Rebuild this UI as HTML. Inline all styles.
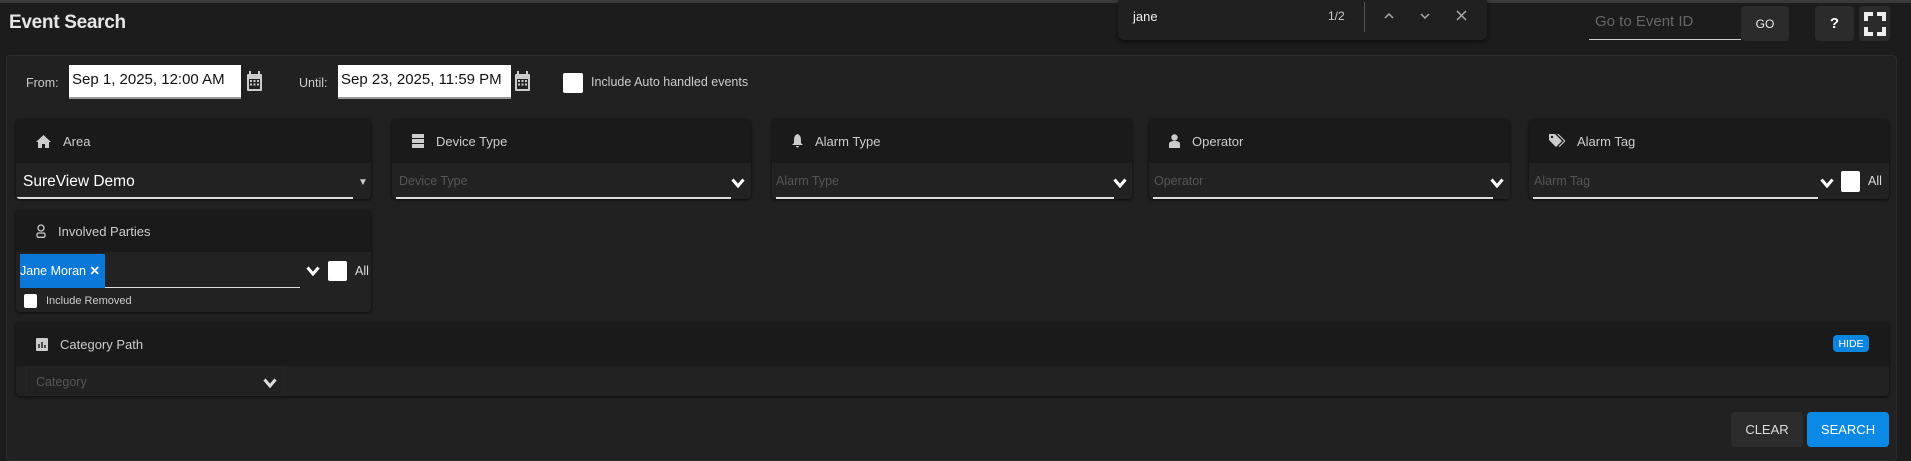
<!DOCTYPE html>
<html><head><meta charset="utf-8"><style>
*{box-sizing:border-box;margin:0;padding:0}
body{width:1911px;height:461px;overflow:hidden;background:#1c1c1c;font-family:"Liberation Sans",sans-serif;color:#ddd;position:relative;font-size:13px}
.a{position:absolute}
.top{left:0;top:0;width:1911px;height:3px;background:#3a3a3a}
.title{left:9px;top:12px;font-size:19px;color:#e6e6e6;font-weight:bold;letter-spacing:-0.3px}
.panel{left:6px;top:55px;width:1891px;height:406px;background:#212121;border:1px solid #2c2c2c;border-radius:4px}
.lbl{color:#ccc;font-size:12.5px}
.date{background:#fff;color:#111;font-size:15px;padding:6px 3px;height:34px;border-bottom:2px solid #999}
.cb{background:#fff;border-radius:2px}
.card{background:#222;border-radius:4px;box-shadow:0 1px 3px #000a;overflow:hidden}
.ch{background:#1a1a1a;height:44px;display:flex;align-items:center;padding-left:20px;color:#ccc;font-size:13px;gap:12px}
.ul{height:2px;background:#ddd}
.ph{color:#555;font-size:12.5px}
.btn{border-radius:4px;display:flex;align-items:center;justify-content:center;font-size:13px}
</style></head><body>
<div class="a top"></div>
<div class="a title">Event Search</div>

<div class="a" style="left:1118px;top:0;width:369px;height:40px;background:#202020;border-radius:0 0 6px 6px;box-shadow:0 2px 4px #0008"></div>
<div class="a" style="left:1133px;top:9px;font-size:13px;color:#eee">jane</div>
<div class="a" style="left:1328px;top:9px;font-size:12px;color:#ccc">1/2</div>
<div class="a" style="left:1364px;top:2px;width:1px;height:30px;background:#555"></div>
<svg class="a" style="left:1384px;top:12px" width="10" height="8" viewBox="0 0 10 8"><path d="M1 6L5 2L9 6" stroke="#aaa" stroke-width="1.5" fill="none"/></svg>
<svg class="a" style="left:1420px;top:12px" width="10" height="8" viewBox="0 0 10 8"><path d="M1 2L5 6L9 2" stroke="#aaa" stroke-width="1.5" fill="none"/></svg>
<svg class="a" style="left:1456px;top:10px" width="11" height="11" viewBox="0 0 11 11"><path d="M1 1L10 10M10 1L1 10" stroke="#aaa" stroke-width="1.5"/></svg>

<div class="a" style="left:1595px;top:13px;font-size:15px;color:#666">Go to Event ID</div>
<div class="a" style="left:1589px;top:39px;width:152px;height:1px;background:#ccc"></div>
<div class="a btn" style="left:1741px;top:6px;width:48px;height:35px;background:#2b2b2b;color:#eee;font-size:12px">GO</div>
<div class="a btn" style="left:1815px;top:6px;width:39px;height:35px;background:#2b2b2b;color:#fff;font-weight:bold;font-size:15px">?</div>
<div class="a btn" style="left:1859px;top:6px;width:31px;height:35px;background:#2b2b2b">
<svg width="24" height="26" viewBox="0 0 24 26" fill="#eee"><path d="M1 1h9v4H5v5H1zM23 1v9h-4V5h-5V1zM1 25v-9h4v5h5v4zM23 25h-9v-4h5v-5h4z"/></svg></div>

<div class="a panel"></div>
<div class="a lbl" style="left:26px;top:76px">From:</div>
<div class="a date" style="left:69px;top:65px;width:172px">Sep 1, 2025, 12:00 AM</div>
<svg class="a" style="left:246px;top:71px" width="17" height="21" viewBox="0 0 17 21" fill="#ccc"><rect x="1" y="3" width="15" height="17" rx="1"/><rect x="3" y="0" width="2" height="5"/><rect x="12" y="0" width="2" height="5"/><rect x="3" y="8" width="11" height="10" fill="#222"/><rect x="4" y="9" width="2" height="2"/><rect x="7.5" y="9" width="2" height="2"/><rect x="11" y="9" width="2" height="2"/><rect x="4" y="12.5" width="2" height="2"/><rect x="7.5" y="12.5" width="2" height="2"/><rect x="11" y="12.5" width="2" height="2"/></svg>
<div class="a lbl" style="left:299px;top:76px">Until:</div>
<div class="a date" style="left:338px;top:65px;width:173px">Sep 23, 2025, 11:59 PM</div>
<svg class="a" style="left:514px;top:71px" width="17" height="21" viewBox="0 0 17 21" fill="#ccc"><rect x="1" y="3" width="15" height="17" rx="1"/><rect x="3" y="0" width="2" height="5"/><rect x="12" y="0" width="2" height="5"/><rect x="3" y="8" width="11" height="10" fill="#222"/><rect x="4" y="9" width="2" height="2"/><rect x="7.5" y="9" width="2" height="2"/><rect x="11" y="9" width="2" height="2"/><rect x="4" y="12.5" width="2" height="2"/><rect x="7.5" y="12.5" width="2" height="2"/><rect x="11" y="12.5" width="2" height="2"/></svg>
<div class="a cb" style="left:563px;top:73px;width:20px;height:20px"></div>
<div class="a lbl" style="left:591px;top:75px">Include Auto handled events</div>

<!-- row 1 cards -->
<div class="a card" style="left:16px;top:119px;width:355px;height:80px">
<div class="ch"><svg width="15" height="13" viewBox="0 0 15 13" fill="#ccc"><path d="M7.5 0L0 7h2v6h4V9h3v4h4V7h2z"/></svg>Area</div>
<div class="a" style="left:7px;top:54px;font-size:15.5px;color:#fff">SureView Demo</div>
<div class="a" style="left:342px;top:58px;font-size:10px;color:#ccc">▼</div>
<div class="a ul" style="left:0;top:78px;width:337px"></div></div>

<div class="a card" style="left:392px;top:119px;width:359px;height:80px">
<div class="ch"><svg width="12" height="14" viewBox="0 0 12 14" fill="#ccc"><rect y="0" width="12" height="4"/><rect y="5" width="12" height="4"/><rect y="10" width="12" height="4"/></svg>Device Type</div>
<div class="a ph" style="left:7px;top:55px">Device Type</div>
<svg class="a" style="left:339px;top:59px" width="14" height="10" viewBox="0 0 14 10"><path d="M1.5 1.5L7 8L12.5 1.5" stroke="#fff" stroke-width="3" fill="none"/></svg>
<div class="a ul" style="left:4px;top:78px;width:335px"></div></div>

<div class="a card" style="left:772px;top:119px;width:360px;height:80px">
<div class="ch"><svg width="11" height="14" viewBox="0 0 11 14" fill="#ccc"><path d="M5.5 0C3 1 2 3 2 6v3L0 11h11L9 9V6C9 3 8 1 5.5 0zM4 12h3a1.5 1.5 0 0 1-3 0z"/></svg>Alarm Type</div>
<div class="a ph" style="left:4px;top:55px">Alarm Type</div>
<svg class="a" style="left:341px;top:59px" width="14" height="10" viewBox="0 0 14 10"><path d="M1.5 1.5L7 8L12.5 1.5" stroke="#fff" stroke-width="3" fill="none"/></svg>
<div class="a ul" style="left:4px;top:78px;width:338px"></div></div>

<div class="a card" style="left:1149px;top:119px;width:361px;height:80px">
<div class="ch"><svg width="11" height="14" viewBox="0 0 11 14" fill="#ccc"><circle cx="5.5" cy="3.5" r="3.2"/><path d="M0 14V10c0-2 2-3 5.5-3S11 8 11 10v4z"/></svg>Operator</div>
<div class="a ph" style="left:5px;top:55px">Operator</div>
<svg class="a" style="left:341px;top:59px" width="14" height="10" viewBox="0 0 14 10"><path d="M1.5 1.5L7 8L12.5 1.5" stroke="#fff" stroke-width="3" fill="none"/></svg>
<div class="a ul" style="left:4px;top:78px;width:340px"></div></div>

<div class="a card" style="left:1529px;top:119px;width:360px;height:80px">
<div class="ch"><svg width="16" height="14" viewBox="0 0 16 14" fill="#ccc"><path d="M0 0h6l7 7-6 6-7-7z"/><path d="M8 0h1.5l7 7-6 6-.8-.8L15 7z"/><circle cx="3" cy="3" r="1.2" fill="#1a1a1a"/></svg>Alarm Tag</div>
<div class="a ph" style="left:5px;top:55px">Alarm Tag</div>
<svg class="a" style="left:291px;top:59px" width="14" height="10" viewBox="0 0 14 10"><path d="M1.5 1.5L7 8L12.5 1.5" stroke="#fff" stroke-width="3" fill="none"/></svg>
<div class="a cb" style="left:312px;top:52px;width:19px;height:21px"></div>
<div class="a lbl" style="left:339px;top:55px;color:#ddd">All</div>
<div class="a ul" style="left:4px;top:78px;width:285px"></div></div>

<!-- involved parties -->
<div class="a card" style="left:16px;top:210px;width:355px;height:102px">
<div class="ch" style="height:42px"><svg width="10" height="14" viewBox="0 0 10 14" fill="none" stroke="#ccc" stroke-width="1.3"><circle cx="5" cy="4" r="3"/><rect x="1" y="9" width="8" height="4.3" rx="1.5"/></svg>Involved Parties</div>
<div class="a" style="left:4px;top:44px;width:85px;height:34px;background:#0a78d8;color:#fff;font-size:12.5px;padding-top:9px">Jane Moran <b>✕</b></div>
<div class="a ul" style="left:89px;top:77px;width:195px;height:1px"></div>
<svg class="a" style="left:290px;top:56px" width="14" height="10" viewBox="0 0 14 10"><path d="M1.5 1.5L7 8L12.5 1.5" stroke="#fff" stroke-width="3" fill="none"/></svg>
<div class="a cb" style="left:312px;top:51px;width:19px;height:20px"></div>
<div class="a lbl" style="left:339px;top:54px;color:#ddd">All</div>
<div class="a cb" style="left:8px;top:84px;width:13px;height:14px"></div>
<div class="a" style="left:30px;top:85px;font-size:11px;color:#ccc">Include Removed</div></div>

<!-- category path -->
<div class="a card" style="left:16px;top:322px;width:1873px;height:74px">
<div class="ch"><svg width="12" height="13" viewBox="0 0 12 13"><rect width="12" height="13" rx="1" fill="#ccc"/><path d="M3 10V6M6 10V4M9 10V7" stroke="#222" stroke-width="1.5"/></svg>Category Path</div>
<div class="a btn" style="left:1817px;top:13px;width:36px;height:17px;background:#0a86e0;color:#fff;font-size:10.5px">HIDE</div>
<div class="a" style="left:10px;top:45px;width:258px;height:29px;background:#212121;border:1px solid #262626"></div>
<div class="a ph" style="left:20px;top:53px">Category</div>
<svg class="a" style="left:247px;top:56px" width="14" height="10" viewBox="0 0 14 10"><path d="M1.5 1.5L7 8L12.5 1.5" stroke="#ddd" stroke-width="3" fill="none"/></svg></div>

<div class="a btn" style="left:1731px;top:412px;width:72px;height:35px;background:#2c2c2c;color:#ddd">CLEAR</div>
<div class="a btn" style="left:1807px;top:412px;width:82px;height:35px;background:#0a8ae6;color:#fff">SEARCH</div>
</body></html>
